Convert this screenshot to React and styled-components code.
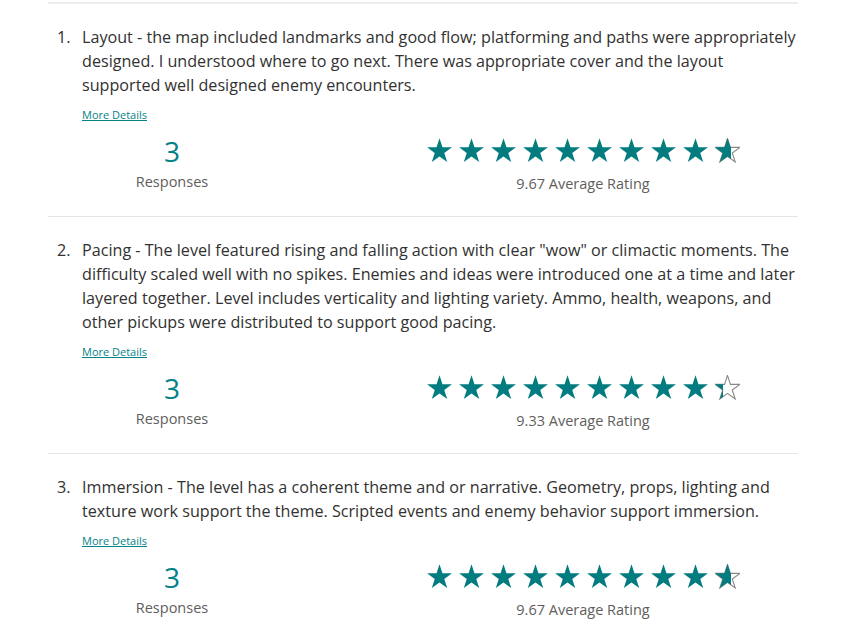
import React from 'react';
import styled, { createGlobalStyle } from 'styled-components';

const GlobalStyle = createGlobalStyle`
  body {
    margin: 0;
    background: #fff;
    font-family: 'Open Sans', 'Noto Sans', sans-serif;
    color: #323130;
  }
`;

const List = styled.div`
  width: 750px;
  margin: 2px 0 0 48px;
`;

const Item = styled.section`
  border-top: ${({ first }) => (first ? '2px solid #ececec' : '1px solid #e6e6e6')};
  padding: 21px 0 22px;
`;

const Question = styled.div`
  display: flex;
  font-size: 16.15px;
  line-height: 24px;
  color: #323130;
`;

const Num = styled.span`
  width: 34px;
  flex: none;
  padding-left: 9px;
  box-sizing: border-box;
`;

const Body = styled.div`
  flex: 1;
`;

const DetailsLink = styled.a`
  display: inline-block;
  margin: 10px 0 0 34px;
  font-size: 11px;
  line-height: 15px;
  color: #038387;
  text-decoration: underline;
  cursor: pointer;
`;

const Stats = styled.div`
  display: grid;
  grid-template-columns: 180px 400px;
  column-gap: 121px;
  margin: 10px 0 0 34px;
  align-items: start;
`;

const Column = styled.div`
  display: flex;
  flex-direction: column;
  align-items: center;
`;

const Count = styled.div`
  font-size: 28px;
  line-height: 34px;
  color: #038387;
`;

const Caption = styled.div`
  margin-top: ${({ gap }) => gap}px;
  font-size: 14.5px;
  line-height: 20px;
  color: #605e5c;
`;

const Stars = styled.div`
  display: flex;
  gap: 7px;
  margin-top: 4px;
`;

const StarBox = styled.span`
  position: relative;
  display: block;
  width: 25px;
  height: 25px;
  svg { display: block; }
`;

const StarFill = styled.span`
  position: absolute;
  top: 0;
  left: 0;
  height: 25px;
  overflow: hidden;
`;

const starPoints = (() => {
  const pts = [];
  const R = 13.1;
  const r = 5.0;
  const cx = 12.5;
  const cy = 13.4;
  for (let k = 0; k < 10; k++) {
    const a = ((-90 + 36 * k) * Math.PI) / 180;
    const rad = k % 2 === 0 ? R : r;
    pts.push(`${(cx + rad * Math.cos(a)).toFixed(2)},${(cy + rad * Math.sin(a)).toFixed(2)}`);
  }
  return pts.join(' ');
})();

const StarSvg = ({ filled }) => (
  <svg width="25" height="25" viewBox="0 0 25 25">
    <polygon
      points={starPoints}
      fill={filled ? '#037c7f' : 'none'}
      stroke={filled ? 'none' : '#8a8886'}
      strokeWidth="1.1"
      strokeLinejoin="miter"
    />
  </svg>
);

function Star({ fill }) {
  return (
    <StarBox>
      {fill < 1 && <StarSvg filled={false} />}
      {fill > 0 && (
        <StarFill style={{ width: `${fill * 25}px` }}>
          <StarSvg filled />
        </StarFill>
      )}
    </StarBox>
  );
}

function Rating({ value }) {
  return (
    <Stars>
      {Array.from({ length: 10 }, (_, i) => (
        <Star key={i} fill={Math.max(0, Math.min(1, value - i))} />
      ))}
    </Stars>
  );
}

const questions = [
  {
    text: 'Layout - the map included landmarks and good flow; platforming and paths were appropriately designed. I understood where to go next. There was appropriate cover and the layout supported well designed enemy encounters.',
    responses: 3,
    rating: 9.67,
  },
  {
    text: 'Pacing - The level featured rising and falling action with clear "wow" or climactic moments. The difficulty scaled well with no spikes. Enemies and ideas were introduced one at a time and later layered together. Level includes verticality and lighting variety. Ammo, health, weapons, and other pickups were distributed to support good pacing.',
    responses: 3,
    rating: 9.33,
  },
  {
    text: 'Immersion - The level has a coherent theme and or narrative. Geometry, props, lighting and texture work support the theme. Scripted events and enemy behavior support immersion.',
    responses: 3,
    rating: 9.67,
  },
];

export default function App() {
  return (
    <>
      <GlobalStyle />
      <List>
        {questions.map((q, i) => (
          <Item key={i} first={i === 0}>
            <Question>
              <Num>{i + 1}.</Num>
              <Body>{q.text}</Body>
            </Question>
            <DetailsLink>More Details</DetailsLink>
            <Stats>
              <Column>
                <Count>{q.responses}</Count>
                <Caption gap={4}>Responses</Caption>
              </Column>
              <Column>
                <Rating value={q.rating} />
                <Caption gap={11}>{q.rating.toFixed(2)} Average Rating</Caption>
              </Column>
            </Stats>
          </Item>
        ))}
      </List>
    </>
  );
}
